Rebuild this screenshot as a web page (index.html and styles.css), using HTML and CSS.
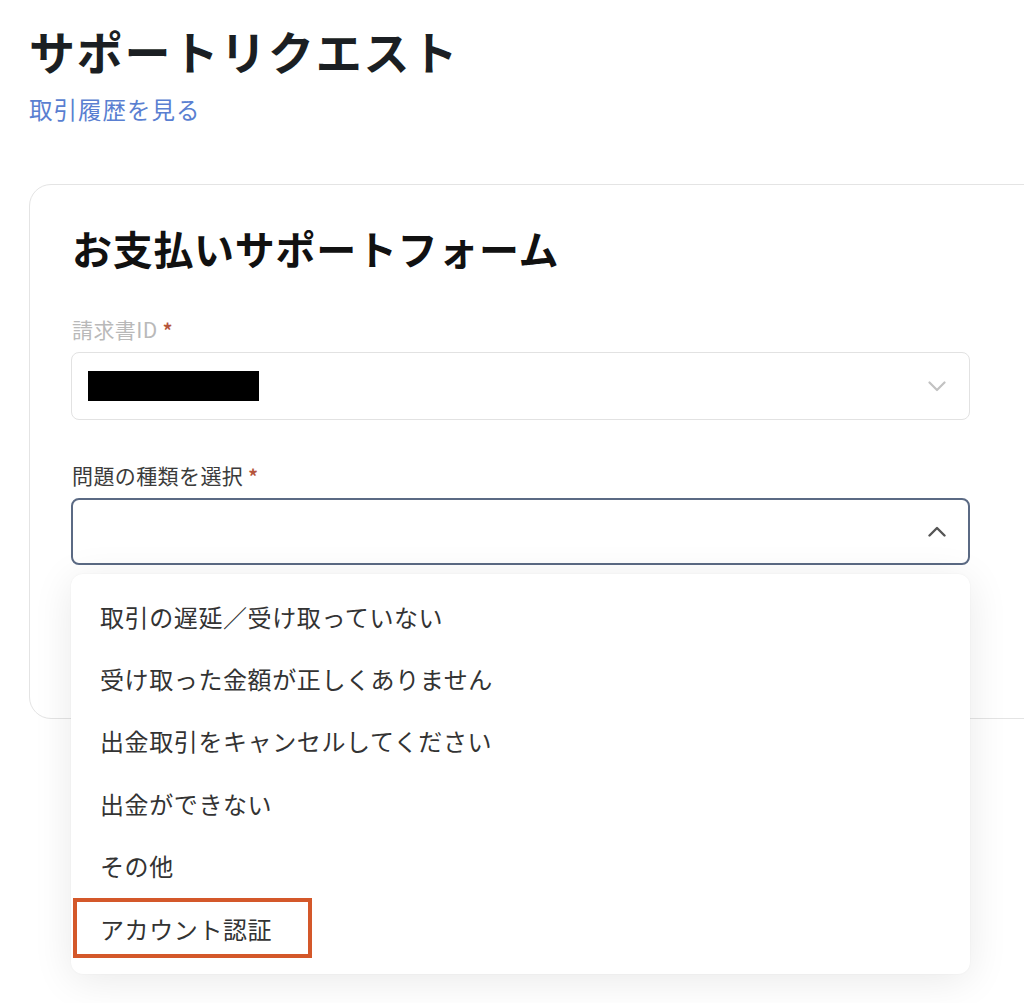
FILE: index.html
```html
<!DOCTYPE html>
<html lang="ja">
<head>
<meta charset="utf-8">
<title>サポートリクエスト</title>
<link rel="stylesheet" href="styles.css">
</head>
<body>
<div class="page">
  <h1 class="page-title">サポートリクエスト</h1>
  <a class="history-link" href="#">取引履歴を見る</a>

  <section class="card">
    <h2 class="card-title">お支払いサポートフォーム</h2>

    <div class="field">
      <label class="label label-muted">請求書ID <span class="req">*</span></label>
      <div class="select select-idle">
        <span class="redacted"></span>
        <svg class="chevron chevron-light" width="18" height="11" viewBox="0 0 18 11"><polyline points="1.5,1.5 9,9 16.5,1.5" fill="none" stroke="currentColor" stroke-width="2.2" stroke-linecap="round" stroke-linejoin="round"/></svg>
      </div>
    </div>

    <div class="field field-open">
      <label class="label">問題の種類を選択 <span class="req">*</span></label>
      <div class="select select-active">
        <svg class="chevron chevron-dark" width="18" height="11" viewBox="0 0 18 11"><polyline points="1.5,9.5 9,2 16.5,9.5" fill="none" stroke="currentColor" stroke-width="2.4" stroke-linecap="round" stroke-linejoin="round"/></svg>
      </div>
      <ul class="menu">
        <li class="menu-item">取引の遅延／受け取っていない</li>
        <li class="menu-item">受け取った金額が正しくありません</li>
        <li class="menu-item">出金取引をキャンセルしてください</li>
        <li class="menu-item">出金ができない</li>
        <li class="menu-item">その他</li>
        <li class="menu-item menu-item-marked">アカウント認証</li>
      </ul>
    </div>
  </section>
</div>
</body>
</html>
```

FILE: styles.css
```css
*, *::before, *::after { box-sizing: border-box; }

html, body {
  margin: 0;
  padding: 0;
  background: #ffffff;
  overflow: hidden;
}

body {
  font-family: "Noto Sans CJK JP", "Noto Sans", sans-serif;
  color: #333333;
}

.page {
  padding: 20px 0 0 29px;
  width: 1024px;
  height: 1003px;
}

.page-title {
  margin: 0;
  font-size: 46px;
  line-height: 60px;
  font-weight: 700;
  color: #1b1f23;
  letter-spacing: 1.8px;
}

.history-link {
  display: block;
  margin-top: 13px;
  font-size: 23.5px;
  line-height: 32px;
  color: #5a7fd1;
  text-decoration: none;
  letter-spacing: 1px;
}

.card {
  margin-top: 59px;
  width: 1060px;
  border: 1px solid #e4e4e4;
  border-radius: 22px;
  padding: 37px 0 153px 41px;
  background: #ffffff;
}

.card-title {
  margin: 0 0 42px 1px;
  font-size: 40px;
  line-height: 52px;
  font-weight: 700;
  color: #111111;
  letter-spacing: 0.7px;
}

.field {
  width: 899px;
}

.field + .field {
  margin-top: 42px;
}

.field-open {
  position: relative;
}

.label {
  display: block;
  margin: 0 0 9px 1px;
  font-size: 21px;
  line-height: 26px;
  color: #3b3b3b;
  letter-spacing: 0.4px;
}

.label-muted {
  color: #b9b9b9;
}

.req {
  color: #b5553c;
  font-size: 19px;
  font-weight: 700;
}

.select {
  height: 68px;
  border-radius: 8px;
  display: flex;
  align-items: center;
  justify-content: space-between;
  padding: 0 23px 0 16px;
  background: #ffffff;
}

.select-idle {
  border: 1px solid #e2e2e2;
}

.select-active {
  height: 67px;
  border: 2px solid #5b6a84;
  justify-content: flex-end;
  padding-right: 22px;
}

.redacted {
  display: block;
  width: 171px;
  height: 30px;
  background: #000000;
}

.chevron {
  display: block;
  flex: none;
}

.chevron-light { color: #c2c2c2; }
.chevron-dark { color: #555555; }

.menu {
  position: absolute;
  left: 0;
  top: calc(100% + 9px);
  width: 899px;
  height: 400px;
  margin: 0;
  padding: 11px 0 0 0;
  list-style: none;
  background: #ffffff;
  border-radius: 12px;
  box-shadow: 0 6px 40px rgba(0, 0, 0, 0.09), 0 0 2px rgba(0, 0, 0, 0.05);
  z-index: 2;
}

.menu-item {
  position: relative;
  height: 62.4px;
  display: flex;
  align-items: center;
  padding-left: 29px;
  font-size: 24px;
  color: #333333;
  letter-spacing: 0.6px;
}

.menu-item-marked::after {
  content: "";
  position: absolute;
  left: 2px;
  top: 1px;
  width: 239px;
  height: 60px;
  border: 4px solid #d4582a;
  pointer-events: none;
}
```
